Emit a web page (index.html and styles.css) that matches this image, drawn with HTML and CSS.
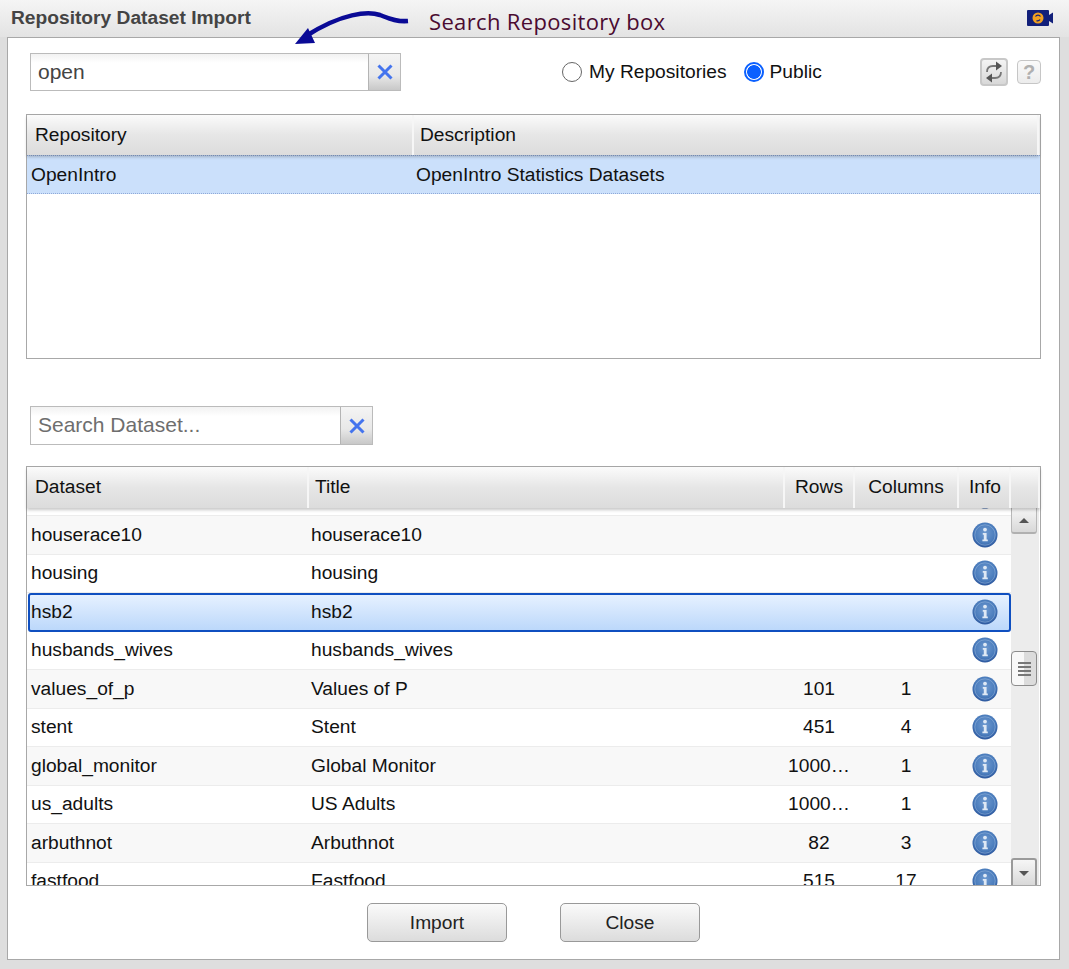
FILE: index.html
```html
<!DOCTYPE html>
<html lang="en">
<head>
    <meta charset="UTF-8">
    <meta name="viewport" content="width=device-width, initial-scale=1.0">
    <title>Repository Dataset Import</title>
    <link rel="stylesheet" href="styles.css">
</head>
<body>
    <svg class="defs" width="0" height="0">
        <defs>
            <radialGradient id="infoFill" cx="50%" cy="42%" r="58%">
                <stop offset="0" stop-color="#6f9ad0"/>
                <stop offset="0.7" stop-color="#4a7cbc"/>
                <stop offset="1" stop-color="#2a559c"/>
            </radialGradient>
            <symbol id="info" viewBox="0 0 26 26">
                <circle cx="13" cy="13" r="12.5" fill="url(#infoFill)"/>
                <circle cx="13" cy="13" r="10.2" fill="none" stroke="#a9c4e4" stroke-opacity="0.45"/>
                <circle cx="13" cy="7.6" r="1.9" fill="#dfe9f5"/>
                <path d="M10.8 11h3.8v6.6h1.2v1.7H10.4v-1.7h1.4v-4.9h-1z" fill="#dfe9f5"/>
            </symbol>
            <symbol id="clear" viewBox="0 0 18 18">
                <path d="M2.500 2.500l13 13M15.500 2.500l-13 13" stroke="#4474ee" stroke-width="3" fill="none"/>
            </symbol>
        </defs>
    </svg>

    <div class="window">
        <div class="titlebar">
            <span class="title">Repository Dataset Import</span>
            <svg class="camera" width="27" height="16" viewBox="0 0 27 16">
                <rect x="0" y="0" width="22" height="16" rx="1" fill="#12207a"/>
                <path d="M22 5l4-2.500v11l-4-2.500z" fill="#12207a"/>
                <circle cx="11" cy="8" r="5.500" fill="#f0a020"/>
                <path d="M8.500 6.500a3 3 0 0 1 5 0M13 9.500a3 3 0 0 1-3.500 1.200" stroke="#12207a" stroke-width="1.300" fill="none"/>
            </svg>
        </div>

        <div class="panel">
            <div class="toolbar">
                <div class="search search-repo">
                    <input class="search-input" type="text" value="open">
                    <button class="search-clear" type="button"><svg width="18" height="18"><use href="#clear"/></svg></button>
                </div>
                <div class="radios">
                    <label class="radio"><input type="radio" name="scope">My Repositories</label>
                    <label class="radio"><input type="radio" name="scope" checked>Public</label>
                </div>
                <div class="tools">
                    <button class="tool tool-refresh" type="button">
                        <svg width="22" height="24" viewBox="0 0 22 24">
                            <path d="M4 12c0-4 2-6 6-6h4" stroke="#777" stroke-width="1.800" fill="none"/>
                            <path d="M13 1.500l6 4.500-6 4.500z" fill="#555"/>
                            <path d="M18 12c0 4-2 6-6 6H8" stroke="#777" stroke-width="1.800" fill="none"/>
                            <path d="M9 13.500L3 18l6 4.500z" fill="#555"/>
                        </svg>
                    </button>
                    <button class="tool tool-help" type="button">?</button>
                </div>
            </div>

            <div class="grid grid-repo">
                <div class="head">
                    <div class="hcell col-repo">Repository</div>
                    <div class="hcell col-desc">Description</div>
                </div>
                <div class="repo-row">
                    <div class="col-repo">OpenIntro</div>
                    <div class="col-desc">OpenIntro Statistics Datasets</div>
                </div>
            </div>

            <div class="search search-data">
                <input class="search-input" type="text" placeholder="Search Dataset...">
                <button class="search-clear" type="button"><svg width="18" height="18"><use href="#clear"/></svg></button>
            </div>

            <div class="grid grid-data">
                <div class="head">
                    <div class="hcell col-name">Dataset</div>
                    <div class="hcell col-title">Title</div>
                    <div class="hcell col-rows">Rows</div>
                    <div class="hcell col-cols">Columns</div>
                    <div class="hcell col-info">Info</div>
                    <div class="hcell col-corner"></div>
                </div>
                <div class="data-body">
                    <div class="rows">
                        <div class="row row-first">
                            <div class="col-name"></div><div class="col-title"></div><div class="col-rows"></div><div class="col-cols"></div>
                            <div class="col-info"><svg width="26" height="26"><use href="#info"/></svg></div>
                        </div>
                        <div class="row alt">
                            <div class="col-name">houserace10</div><div class="col-title">houserace10</div><div class="col-rows"></div><div class="col-cols"></div>
                            <div class="col-info"><svg width="26" height="26"><use href="#info"/></svg></div>
                        </div>
                        <div class="row">
                            <div class="col-name">housing</div><div class="col-title">housing</div><div class="col-rows"></div><div class="col-cols"></div>
                            <div class="col-info"><svg width="26" height="26"><use href="#info"/></svg></div>
                        </div>
                        <div class="row selected">
                            <div class="col-name">hsb2</div><div class="col-title">hsb2</div><div class="col-rows"></div><div class="col-cols"></div>
                            <div class="col-info"><svg width="26" height="26"><use href="#info"/></svg></div>
                        </div>
                        <div class="row">
                            <div class="col-name">husbands_wives</div><div class="col-title">husbands_wives</div><div class="col-rows"></div><div class="col-cols"></div>
                            <div class="col-info"><svg width="26" height="26"><use href="#info"/></svg></div>
                        </div>
                        <div class="row alt">
                            <div class="col-name">values_of_p</div><div class="col-title">Values of P</div><div class="col-rows">101</div><div class="col-cols">1</div>
                            <div class="col-info"><svg width="26" height="26"><use href="#info"/></svg></div>
                        </div>
                        <div class="row">
                            <div class="col-name">stent</div><div class="col-title">Stent</div><div class="col-rows">451</div><div class="col-cols">4</div>
                            <div class="col-info"><svg width="26" height="26"><use href="#info"/></svg></div>
                        </div>
                        <div class="row alt">
                            <div class="col-name">global_monitor</div><div class="col-title">Global Monitor</div><div class="col-rows">1000…</div><div class="col-cols">1</div>
                            <div class="col-info"><svg width="26" height="26"><use href="#info"/></svg></div>
                        </div>
                        <div class="row">
                            <div class="col-name">us_adults</div><div class="col-title">US Adults</div><div class="col-rows">1000…</div><div class="col-cols">1</div>
                            <div class="col-info"><svg width="26" height="26"><use href="#info"/></svg></div>
                        </div>
                        <div class="row alt">
                            <div class="col-name">arbuthnot</div><div class="col-title">Arbuthnot</div><div class="col-rows">82</div><div class="col-cols">3</div>
                            <div class="col-info"><svg width="26" height="26"><use href="#info"/></svg></div>
                        </div>
                        <div class="row">
                            <div class="col-name">fastfood</div><div class="col-title">Fastfood</div><div class="col-rows">515</div><div class="col-cols">17</div>
                            <div class="col-info"><svg width="26" height="26"><use href="#info"/></svg></div>
                        </div>
                    </div>
                    <div class="scrollbar">
                        <div class="scroll-btn scroll-up"><span class="tri-up"></span></div>
                        <div class="scroll-thumb"><span></span><span></span><span></span><span></span></div>
                        <div class="scroll-btn scroll-down"><span class="tri-down"></span></div>
                    </div>
                </div>
            </div>

            <div class="actions">
                <button class="btn" type="button">Import</button>
                <button class="btn" type="button">Close</button>
            </div>
        </div>

        <!-- annotation drawn over the screenshot -->
        <svg class="note-arrow" width="122" height="36" viewBox="0 0 122 36">
            <path d="M116 12C104 13 96 9 88 6C76 2 50 4 14 27" stroke="#0a0a96" stroke-width="4.500" fill="none"/>
            <path d="M3 35L16 19l7 15z" fill="#0a0a96"/>
        </svg>
        <span class="note-text">Search Repository box</span>
    </div>
</body>
</html>
```

FILE: styles.css
```css
* {
    box-sizing: border-box;
}
html, body {
    margin: 0;
    height: 100%;
    overflow: hidden;
}
body {
    font-family: "Liberation Sans", Arial, sans-serif;
    font-size: 19.2px;
    color: #111;
    background-color: #fff;
}
.defs {
    position: absolute;
}

/* window frame */
.window {
    position: relative;
    display: flex;
    flex-direction: column;
    width: 1069px;
    height: 969px;
    padding: 0 9px 9px 7px;
    background-color: #dedede;
    border-top-right-radius: 6px;
}
.titlebar {
    display: flex;
    align-items: center;
    justify-content: space-between;
    flex: none;
    height: 37px;
    margin: 0 -9px 0 -7px;
    padding: 0 15px 2px 11px;
    background: linear-gradient(#f5f5f5, #e3e3e3);
}
.title {
    font-weight: bold;
    color: #444;
}
.panel {
    flex: 1;
    padding: 15px 18px 0;
    background-color: #fff;
    border: 1px solid #a8a8a8;
}

/* top row */
.toolbar {
    display: flex;
    align-items: center;
    height: 38px;
    padding-left: 4px;
}
.search {
    display: flex;
    border: 1px solid #bbb;
}
.search-repo {
    width: 371px;
    height: 38px;
}
.search-data {
    width: 343px;
    height: 39px;
    margin: 47px 0 21px 4px;
}
.search-input {
    flex: 1;
    min-width: 0;
    padding: 0 7px;
    border: none;
    outline: none;
    font-family: inherit;
    font-size: 21px;
    color: #444;
    background: linear-gradient(#f2f2f2, #fff 25%);
}
.search-data .search-input {
    padding-bottom: 2px;
}
.search-input::placeholder {
    color: #6e6e6e;
    opacity: 1;
}
.search-clear {
    display: flex;
    align-items: center;
    justify-content: center;
    flex: none;
    width: 32px;
    padding: 0;
    border: none;
    border-left: 1px solid #b4b4b4;
    background: linear-gradient(#f4f4f4, #e8e8e8 60%, #c8c8c8);
}
.radios {
    display: flex;
    gap: 17px;
    margin-left: 161px;
}
.radio {
    display: flex;
    align-items: center;
    gap: 7px;
}
.radio:last-child {
    gap: 6px;
}
.radio input {
    appearance: none;
    width: 20px;
    height: 20px;
    margin: 0;
    border: 1.500px solid #666;
    border-radius: 50%;
    background-color: #fff;
}
.radio input:checked {
    border: 2px solid #0a60ff;
    background: radial-gradient(circle, #0a60ff 0, #0a60ff 6.500px, #fff 7.200px);
}
.tools {
    display: flex;
    align-items: center;
    gap: 9px;
    margin-left: auto;
}
.tool {
    display: flex;
    align-items: center;
    justify-content: center;
    padding: 0;
    border: 1px solid #c6c6c6;
    border-radius: 4px;
    background: linear-gradient(#f4f4f4, #d8d8d8);
}
.tool-refresh {
    width: 28px;
    height: 28px;
    border: 2px solid #c8c8c8;
}
.tool-help {
    width: 24px;
    height: 24px;
    font-family: inherit;
    font-size: 20px;
    font-weight: bold;
    color: #b0b0b0;
    background: linear-gradient(#fafafa, #ececec);
}

/* tables */
.grid {
    border: 1px solid #a8a8a8;
    background-color: #fff;
}
.grid-repo {
    height: 245px;
    margin-top: 23px;
}
.grid-data {
    height: 420px;
}
.head {
    position: relative;
    z-index: 1;
    display: flex;
    height: 41px;
    box-shadow: 0 2px 3px rgba(0, 0, 0, 0.22);
    background-color: #fff;
}
.grid-repo .head {
    height: 40px;
    margin-right: 1px;
}
.hcell {
    display: flex;
    align-items: center;
    padding-left: 8px;
    border-right: 2px solid #f6f6f6;
    background: linear-gradient(#fbfbfb, #e6e6e6 50%, #dcdcdc);
}
.grid-data .hcell {
    padding-bottom: 2px;
}
.hcell + .hcell {
    padding-left: 6px;
}
.col-repo {
    flex: none;
    width: 386px;
}
.hcell.col-repo {
    width: 387px;
}
.col-desc {
    flex: 1;
}
.repo-row {
    display: flex;
    align-items: center;
    height: 39px;
    background-color: #cbe0fb;
    border-top: 1px dotted #8fa9d8;
    border-bottom: 1px dotted #8fa9d8;
}
.repo-row .col-repo {
    padding-left: 4px;
}
.repo-row .col-desc {
    padding-left: 3px;
}
.col-name {
    flex: none;
    width: 281px;
}
.hcell.col-name {
    width: 282px;
}
.col-title {
    flex: none;
    width: 477px;
}
.hcell.col-title {
    width: 476px;
}
.col-rows {
    flex: none;
    width: 70px;
}
.col-cols {
    flex: none;
    width: 104px;
}
.col-info {
    flex: none;
    width: 52px;
}
.col-corner {
    flex: 1;
}
.hcell.col-rows, .hcell.col-cols {
    justify-content: center;
    padding-left: 0;
}
.hcell.col-info {
    justify-content: center;
    padding-left: 2px;
}
.data-body {
    display: flex;
    height: 377px;
    overflow: hidden;
}
.rows {
    flex: none;
    width: 984px;
    overflow: hidden;
}
.row {
    display: flex;
    align-items: center;
    height: 38.500px;
    white-space: nowrap;
    border-bottom: 1px solid #ececec;
}
.row-first {
    margin-top: -30.500px;
}
.row.alt {
    background-color: #f8f8f8;
}
.row .col-name {
    padding-left: 4px;
}
.row .col-title {
    padding-left: 3px;
}
.row .col-rows, .row .col-cols {
    padding-right: 2px;
    text-align: center;
}
.row .col-info {
    display: flex;
    align-items: center;
    justify-content: center;
}
.row.selected {
    margin-left: 1px;
    border: 2px solid #0f4fc0;
    border-radius: 3px;
    background: linear-gradient(#e6f1ff, #bcd8fb);
}
.row.selected .col-name {
    width: 278px;
    padding-left: 1px;
}
.row.selected .col-info {
    margin-left: 1px;
    width: 50px;
}

/* scrollbar */
.scrollbar {
    display: flex;
    flex-direction: column;
    flex: none;
    width: 28px;
    padding-right: 2px;
    background-color: #ececec;
}
.scroll-btn {
    display: flex;
    align-items: center;
    justify-content: center;
    flex: none;
    height: 26px;
    border: 1px solid #b8b8b8;
    background: linear-gradient(#f6f6f6, #d8d8d8);
}
.scroll-up {
    border-top: none;
    border-bottom: 2px solid #b0b0b0;
    border-radius: 0 0 3px 3px;
}
.scroll-down {
    height: 28px;
    margin-top: 172px;
    border: 2px solid #9a9a9a;
    border-bottom: none;
    border-radius: 3px 3px 0 0;
}
.tri-up {
    border: 5px solid transparent;
    border-top: none;
    border-bottom: 5px solid #555;
}
.tri-down {
    border: 5px solid transparent;
    border-bottom: none;
    border-top: 5px solid #555;
}
.scroll-thumb {
    display: flex;
    flex-direction: column;
    align-items: center;
    justify-content: center;
    gap: 2px;
    flex: none;
    height: 35px;
    margin-top: 117px;
    border: 1px solid #8c8c8c;
    border-radius: 4px;
    background: linear-gradient(90deg, #f8f8f8 50%, #dcdcdc 50%);
}
.scroll-thumb span {
    width: 13px;
    height: 2px;
    background-color: #777;
}

/* bottom buttons */
.actions {
    display: flex;
    justify-content: center;
    gap: 53px;
    margin-top: 17px;
}
.btn {
    width: 140px;
    height: 39px;
    font-family: inherit;
    font-size: 19.2px;
    color: #222;
    border: 1px solid #999;
    border-radius: 5px;
    background: linear-gradient(#fafafa, #dcdcdc);
}

/* annotation */
.note-arrow {
    position: absolute;
    left: 292px;
    top: 9px;
}
.note-text {
    position: absolute;
    left: 429px;
    top: 6px;
    font-family: "Open Sans", sans-serif;
    font-size: 22px;
    letter-spacing: 0.35px;
    color: #4a0a30;
}
```
